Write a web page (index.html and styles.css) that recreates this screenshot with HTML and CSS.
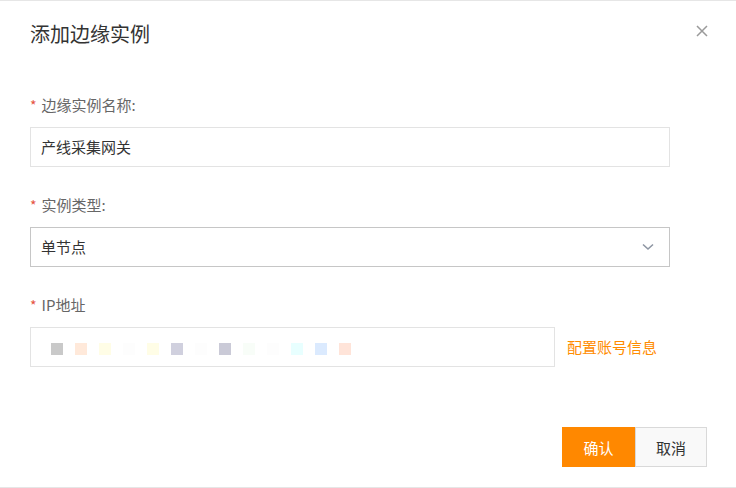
FILE: index.html
```html
<!DOCTYPE html>
<html lang="zh">
<head>
<meta charset="utf-8">
<link rel="stylesheet" href="styles.css">
</head>
<body>
<div class="dialog">
  <div class="header">
    <h1 class="title">添加边缘实例</h1>
    <span class="close">
      <svg width="12" height="12" viewBox="0 0 12 12"><path d="M1 1L11 11M11 1L1 11" stroke="#9a9a9a" stroke-width="1.5" fill="none"/></svg>
    </span>
  </div>
  <div class="form">
    <div class="field">
      <div class="label"><span class="star">*</span>边缘实例名称:</div>
      <div class="input">产线采集网关</div>
    </div>
    <div class="field">
      <div class="label"><span class="star">*</span>实例类型:</div>
      <div class="input select">
        <span>单节点</span>
        <svg class="chev" width="12" height="8" viewBox="0 0 12 8"><path d="M1 1.5L6 6L11 1.5" stroke="#8e96a3" stroke-width="1.6" fill="none"/></svg>
      </div>
    </div>
    <div class="field">
      <div class="label"><span class="star">*</span>IP地址</div>
      <div class="row">
        <div class="input ip">
          <span class="sq c0"></span><span class="sq c1"></span><span class="sq c2"></span><span class="sq c3"></span><span class="sq c2"></span><span class="sq c5"></span><span class="sq c3"></span><span class="sq c7"></span><span class="sq c8"></span><span class="sq c3"></span><span class="sq c10"></span><span class="sq c11"></span><span class="sq c12"></span>
        </div>
        <a class="link">配置账号信息</a>
      </div>
    </div>
  </div>
  <div class="footer">
    <button class="btn primary">确认</button>
    <button class="btn">取消</button>
  </div>
</div>
</body>
</html>
```
FILE: styles.css
```css
* { box-sizing: border-box; }
html, body { margin: 0; padding: 0; background: #fff; }
body {
  font-family: "Noto Sans CJK SC", "Noto Sans", sans-serif;
  color: #333;
}
.dialog {
  width: 736px;
  height: 488px;
  border-top: 1px solid #e6e6e6;
  border-bottom: 1px solid #e6e6e6;
}
.header {
  display: flex;
  justify-content: space-between;
  align-items: center;
  padding: 17px 28px 0 30px;
  height: 48px;
}
.title {
  margin: 0;
  font-size: 20px;
  font-weight: normal;
  line-height: 30px;
  color: #333;
}
.close { display: flex; margin-top: -6px; }
.form { padding: 46px 0 0 30px; }
.field { margin-bottom: 28px; }
.label {
  display: flex;
  align-items: center;
  height: 20px;
  font-size: 15px;
  line-height: 20px;
  color: #666;
  margin-bottom: 12px;
}
.star { color: #e5533f; margin-right: 5px; font-size: 14px; line-height: 20px; }
.input {
  width: 640px;
  height: 40px;
  border: 1px solid #e3e3e3;
  font-size: 15px;
  line-height: 38px;
  padding: 0 10px;
  color: #333;
}
.select {
  border-color: #c6c6c6;
  display: flex;
  justify-content: space-between;
  align-items: center;
  padding-right: 15px;
}
.row { display: flex; align-items: center; gap: 12px; }
.ip {
  width: 525px;
  display: flex;
  align-items: center;
  gap: 12px;
  padding: 4px 0 0 20px;
}
.sq { width: 12px; height: 12px; display: block; }
.c0 { background: #c9c9c9; }
.c1 { background: #ffe9da; }
.c2 { background: #fffde6; }
.c3 { background: #fdfdfd; }
.c5 { background: #d0d0de; }
.c7 { background: #cacad7; }
.c8 { background: #f8fdf8; }
.c10 { background: #e8ffff; }
.c11 { background: #dbeafe; }
.c12 { background: #ffe4d9; }
.link { color: #ff8c00; font-size: 15px; line-height: 20px; }
.footer {
  display: flex;
  justify-content: flex-end;
  padding: 32px 29px 0 0;
}
.btn {
  width: 72px;
  height: 40px;
  font-family: inherit;
  font-size: 15px;
  border: 1px solid #d9d9d9;
  background: #f9f9f9;
  color: #333;
  padding: 0;
  margin: 0;
}
.btn.primary {
  width: 73px;
  background: #ff8800;
  border-color: #ff8800;
  color: #fff;
}
```
